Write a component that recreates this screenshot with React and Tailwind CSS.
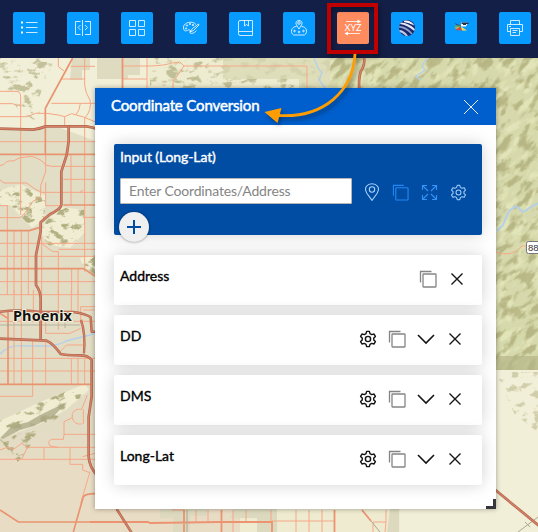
const SHADOW = 'shadow-[0_0_16px_rgba(0,0,0,0.18)]';

function Highway({ d, w = 3 }) {
  return (
    <g fill="none" strokeLinejoin="round">
      <path d={d} stroke="#b0674f" strokeWidth={w * 2.9} />
      <path d={d} stroke="#d98267" strokeWidth={w * 1.4} />
    </g>
  );
}

function Basemap() {
  return (
    <svg className="absolute inset-0 h-full w-full" viewBox="0 0 538 532" aria-hidden="true">
      <defs>
        <filter id="relief" x="0" y="0" width="1" height="1" colorInterpolationFilters="sRGB">
          <feTurbulence type="fractalNoise" baseFrequency="0.09 0.13" numOctaves="4" seed="8" />
          <feColorMatrix values="0 0 0 0 .62  0 0 0 0 .61  0 0 0 0 .41  7 0 0 0 -3.7" />
          <feComposite in2="SourceAlpha" operator="in" />
        </filter>
        <filter id="ridges" x="0" y="0" width="1" height="1" colorInterpolationFilters="sRGB">
          <feTurbulence type="fractalNoise" baseFrequency="0.06 0.13" numOctaves="4" seed="5" />
          <feColorMatrix values="0 0 0 0 .67  0 0 0 0 .66  0 0 0 0 .46  6 0 0 0 -3" />
          <feComposite in2="SourceAlpha" operator="in" />
        </filter>
        <filter id="light" x="0" y="0" width="1" height="1" colorInterpolationFilters="sRGB">
          <feTurbulence type="fractalNoise" baseFrequency="0.05 0.12" numOctaves="4" seed="21" />
          <feColorMatrix values="0 0 0 0 .91  0 0 0 0 .92  0 0 0 0 .75  6 0 0 0 -3" />
          <feComposite in2="SourceAlpha" operator="in" />
        </filter>
        <linearGradient id="desert" x1="0" y1="0" x2="0" y2="1">
          <stop offset="0" stopColor="#e2dec5" />
          <stop offset=".7" stopColor="#e2dcc4" />
          <stop offset="1" stopColor="#eadcc4" />
        </linearGradient>
      </defs>
      <rect width="538" height="532" fill="#f2efd8" />
      <path d="M0 128H60L98 142V532H0Z" fill="url(#desert)" />
      <path d="M0 455L98 465V509H240V532H0Z" fill="#e9dcc5" />
      <path d="M145 509H400V532H145Z" fill="#eeebd0" />
      <path d="M72 58H90V70H82V80H70ZM97 58H140V75H128V79H97Z" fill="#dedbc0" />
      <path d="M330 58H538V370H330Z" fill="#d6d9ab" />
      <g transform="rotate(-48 440 180)">
        <path d="M200 -60H680V480H200Z" fill="#000" filter="url(#light)" opacity=".7" />
        <path d="M200 -60H680V480H200Z" fill="#000" filter="url(#ridges)" opacity=".7" />
      </g>
      <path d="M148 58H330V88H148Z" fill="#eeecd0" />
      <path d="M0 58H148V128H60L0 128Z" fill="#f2efd8" />
      <path d="M72 58H90V70H82V80H70ZM97 58H140V75H128V79H97Z" fill="#dedbc0" />
      <path d="M0 128H60L98 142V532H0Z" fill="url(#desert)" />
      <path d="M0 455L98 465V509H240V532H0Z" fill="#e9dcc5" />
      <path d="M240 509H400V532H240Z" fill="#eeebd0" />
      <path d="M400 370H538V532H400Z" fill="#f2efd8" />
      <path d="M490 356H538V370H490Z" fill="#b5b588" opacity=".7" />
      <path d="M496 372H538V432L515 415Z" fill="#000" filter="url(#relief)" opacity=".4" />
      <path d="M0 58H55L38 100L42 125L18 110L0 75ZM150 58H330V88H150Z" fill="#000" filter="url(#relief)" opacity=".55" />
      <path d="M223 58H330V88H299V79H223Z" fill="#d9dab4" opacity=".75" />
      <path d="M0 190L20 184L46 196L44 220L32 228L10 205L0 206ZM45 222L62 207L84 210L85 232L70 248L48 245L40 232ZM80 258L95 255V276L82 264ZM0 421L40 402L85 384L89 390L66 410L38 425L18 432L0 440Z" fill="#f0edd3" />
      <path d="M0 190L20 184L46 196L44 220L32 228L10 205L0 206ZM45 222L62 207L84 210L85 232L70 248L48 245L40 232ZM80 258L95 255V276L82 264ZM0 421L40 402L85 384L89 390L66 410L38 435L18 462L0 440Z" fill="#000" filter="url(#relief)" opacity=".75" />
      <path d="M0 438L12 426L28 422L42 414L67 402L54 416L34 426L20 430L3 439Z" fill="#aaa684" opacity=".75" />
      <path d="M175 509H207V516H190V532H173V518H160V509ZM235 509H277V532H257V518H230ZM390 509H399V532H387Z" fill="#dcd9be" />

      {/* rivers */}
      <g fill="none" stroke="#b5cfe9" strokeWidth="1.4">
        <path d="M0 354Q10 344 23 346H50Q62 344 66 341L90 335L98 332" />
        <path d="M314 58L318 68L322 73L319 80L325 88M427 58L422 66L425 70L416 76L420 80" />
        <path d="M497 231L503 225L509 211L516 206L523 212L531 207L538 203" strokeWidth="2" />
      </g>

      {/* local streets, northwest quarter */}
      <g transform="translate(0 55) scale(.33333)" fill="none" stroke="#f6a585" strokeWidth="3">
        <path d="M0 109H48Q62 110 62 124V480M0 146H38Q46 152 62 151M0 185H82L106 175H140L175 180L194 185L215 176L250 186L285 200M154 145H285M175 9V35L192 48M185 72H254M212 34H285M254 9V90Q256 115 270 135Q276 165 254 190V650M241 145Q240 165 228 179M194 185V214M0 260H285M0 332L12 328Q20 315 40 318L60 308L95 304Q125 312 137 330L155 334H285M137 298V350L122 392V424L98 440L75 474L60 488H0M137 382V452H184M0 375L12 384H80L105 402L125 412H285M190 373H285M213 300V450M240 412L250 405M0 565H285M0 604H285M0 680H285M22 450V720M42 527V720M64 527V720M85 527V720M125 545V720M125 565L148 583L160 590H175V720M175 583H285M215 641V720M234 641V720M254 487H285M0 452H22" />
      </g>
      <g transform="translate(0 55) scale(.33333)" fill="none" stroke="#e99470" strokeWidth="5">
        <path d="M218 9L136 160V298M0 298H285M190 450H285M0 527H88L118 518M0 641H250L285 663" />
      </g>

      {/* local streets, southwest quarter */}
      <g transform="translate(0 290) scale(.33333)" fill="none" stroke="#f5a888" strokeWidth="3">
        <path d="M0 14H285M0 94H285M0 205H285M0 243H285M0 319H98V283M42 0V283M64 0V283M98 150V283M137 150V283M175 0V120M214 0V70M234 0V70M214 205V283M234 205V283M254 205V283M100 0V70M137 70V130H210L242 115M285 50H242V100M250 60H285M180 185L200 165H250M0 480L22 472L40 478L65 460L82 472H285M65 508L82 472M0 508H285M132 472V508M285 433H192V395L217 383V370Q225 355 245 358L262 315M217 383Q222 405 245 402M250 358V402M192 433L190 448H155Q140 454 150 468L175 472M210 472V523H248V540L270 548M270 545L242 640M248 500L285 490" />
      </g>
      <g transform="translate(0 290) scale(.33333)" fill="none" stroke="#e99470" strokeWidth="5">
        <path d="M24 60V283M0 283H270M0 660L55 696H285M220 726L250 620Q258 611 285 611M0 70L25 86" />
      </g>
      <path d="M0 325H80M8 323V327M65 323V328" stroke="#aaa896" strokeWidth=".8" fill="none" />

      {/* roads along the north and south edges */}
      <g fill="none" stroke="#f5a888" strokeWidth="1">
        <path d="M122 66H148M147 58V88M122 79H147M147 66Q163 66 172 63L180 62L184 66L173 82V88M184 66H307V88" />
        <path d="M196 510V522M208 510V522M233 510V532M246 510V521M271 510V522M296 510V532M309 510V532M322 510V532M373 522H386V510M386 522L385 532M373 522V532M272 521H335M172 510H184M496 252Q512 258 522 246H527" />
      </g>
      <g fill="none" stroke="#ec9372" strokeWidth="1.8">
        <path d="M122.500 58V88M90 522H148L150 523L220 522H272V532M184 510V532M221.500 510V532M334.500 510V532M362 510L371 521" />
      </g>
      <path d="M187 510V532M371 521L380 532M518 532L538 517M525 522L530 527" stroke="#aaa891" fill="none" />
      <g transform="scale(.33333)">
        <Highway d="M0 386L100 389Q122 385 137 379H260Q280 381 300 391" />
        <Highway d="M206 379V425L200 465L184 515V615Q182 627 150 643L122 667V695L108 765V855Q122 875 122 895V1020" w={2.8} />
        <Highway d="M0 935Q60 928 120 936H220Q260 942 272 952L275 995H290" w={2.6} />
        <Highway d="M0 1016L140 1022Q160 1030 182 1062Q195 1066 240 1066Q265 1066 275 1080V1190L266 1250V1370Q268 1400 290 1425" w={2.8} />
        <Highway d="M243 960Q257 1000 252 1060" w={2.4} />
        <Highway d="M350 1527L396 1600" w={2.6} />
        <Highway d="M1480 1465L1620 1580" w={2.8} />
        <Highway d="M1092 170Q1096 195 1082 215Q1075 240 1078 270" w={2.8} />
      </g>
      <text x="13" y="321" fontFamily='"Noto Sans", sans-serif' fontSize="14.500" fontWeight="700" textLength="59" fill="#111" stroke="#f3f0de" strokeWidth="2" paintOrder="stroke">Phoenix</text>
      <rect x="526.500" y="241.500" width="20" height="12" rx="2" fill="#fff" stroke="#777" />
      <text x="528" y="251" fontFamily='"Liberation Sans", Arial, sans-serif' fontSize="9.500" fill="#333">88</text>
    </svg>
  );
}

function Line({ size = 20, w = 1, box = 20, className = '', children }) {
  return (
    <svg className={`block shrink-0 ${className}`} width={size} height={size} viewBox={`0 0 ${box} ${box}`} fill="none" stroke="currentColor" strokeWidth={w}>
      {children}
    </svg>
  );
}

const TOOLS = [
  ['Legend', <g key="i"><path d="M7 4.500H18.500M7 9.500H18.500M7 14.500H18.500" /><path d="M3 3.500V5.500M3 8.500V10.500M3 13.500V15.500" strokeWidth="2" /></g>],
  ['Swipe', <path key="i" d="M9.500 2V18M7.500 3.500H2.500V16.500H7.500M12 3.500H17.500V16.500H12M7.500 7L5 9.500L7.500 12M12 7L14.500 9.500L12 12" />],
  ['Basemap Gallery', <path key="i" d="M2.500 2.500H8.500V8.500H2.500ZM11.500 2.500H17.500V8.500H11.500ZM2.500 11.500H8.500V17.500H2.500ZM11.500 11.500H17.500V17.500H11.500Z" />],
  ['Draw', <g key="i"><path d="M15 6.500C12 2.500 3 4 2.500 9C2 13.500 5.500 13.500 7 12C8.500 11.500 10 12 9 13.500C8 16.500 13 16 15.500 12.500M17.500 6L11.500 10.500L9 14L12.500 12.500L18 7Z" /><circle cx="6" cy="7.500" r=".7" /><circle cx="9" cy="6" r=".7" /><circle cx="12" cy="7" r=".7" /><circle cx="5" cy="10.500" r=".7" /></g>],
  ['Bookmarks', <path key="i" d="M5 2.500H17.500V17.500H5Q3.500 17.500 3.500 15.500V4Q3.500 2.500 5 2.500M3.500 13.500H17.500M9.500 2.500V8L11.500 6.500L13.500 8V2.500" />],
  ['Map Notes', <g key="i"><path d="M10 11L7.500 7C4.500 1 15.500 1 12.500 7ZM7.500 8.500C2 8.500 1 15 4.500 17H15.500C19 15 18 8.500 12.500 8.500" /><circle cx="10" cy="5" r="1.300" /><circle cx="5.500" cy="13" r=".8" /><circle cx="10" cy="14" r=".8" /><circle cx="14.500" cy="13" r=".8" /></g>],
  ['Coordinate Conversion', <g key="i"><path d="M3 3.500H16M3 15.500H17" /><path d="M14.500 1.500L18 3.500L14.500 5.500ZM5 13.500L1.500 15.500L5 17.500Z" fill="currentColor" stroke="none" /><text x="1.500" y="12.800" textLength="17" lengthAdjust="spacingAndGlyphs" fontFamily="Lato, sans-serif" fontSize="9.500" fill="currentColor" stroke="none">XYZ</text></g>],
  ['Google Earth', <g key="i" stroke="none"><circle cx="10" cy="10" r="8" fill="#1b2766" /><path d="M4 4.500Q12 5 17.800 11L17.300 13Q10 7 3 6Z" fill="#dfe5f3" /><path d="M2.200 8Q10 8 15.500 15.500L14.500 16.500Q8 10 2 9.500Z" fill="#8fa1d2" /><path d="M2.300 12Q7 12 11 17.800L9 18Q5 14.500 2.800 14Z" fill="#c3cde8" /><path d="M7 2.700Q14 2 17.300 7.500Q12 4.500 7 4Z" fill="#f6f9ff" /></g>],
  ['Pictometry', <g key="i" stroke="none"><path d="M3 5L10 7.500L9 9.500Z" fill="#304a72" /><path d="M10 4.500H17L15 8.500H10Z" fill="#fff" /><path d="M10.500 4.500H17.500V6H15V7H12V6H10.500Z" fill="#263244" /><path d="M3 7.500H10L9 9H4Z" fill="#4fae68" /><path d="M3 10L9.500 8.500L7 11Z" fill="#f3c52b" /><path d="M9 8.500L11 12.500L4.500 12Z" fill="#dc4735" /><path d="M10 8.500L16 12.500H11Z" fill="#f3df54" /></g>],
  ['Print', <path key="i" d="M5.500 6.500V2.500H14.500V6.500M5.500 13.500H2.500V6.500H17.500V13.500H14.500M5.500 10.500H14.500V17.500H5.500ZM7.500 12.500H12.500M7.500 14.500H11M4 8.500H6" />],
];

const Gear = ({ size = 18, className, w = 1.1 }) => (
  <Line size={size} w={w} className={className}>
    <path strokeLinejoin="round" d="M8.500 1.500H11.500L12.200 4L14.100 5.100L16.700 4.500L18.200 7.100L16.400 9V11L18.200 12.900L16.700 15.500L14.100 14.900L12.200 16L11.500 18.500H8.500L7.800 16L5.900 14.900L3.300 15.500L1.800 12.900L3.600 11V9L1.800 7.100L3.300 4.500L5.900 5.100L7.800 4Z" />
    <circle cx="10" cy="10" r="2.900" />
  </Line>
);

const Copy = ({ size = 18, className, w = 1 }) => (
  <Line size={size} w={w} box={18} className={className}>
    <rect x="4" y="4" width="13" height="13" rx=".5" />
    <path d="M1.500 12.500V1.500H12.500" />
  </Line>
);

const Close = () => (
  <Line size={14} box={14} w={1.4}>
    <path d="M1.500 1.500L12.500 12.500M12.500 1.500L1.500 12.500" />
  </Line>
);

function OutputRow({ label, compact }) {
  return (
    <div className={`flex h-[50px] rounded-[2px] bg-white pl-1.5 ${SHADOW} ${compact ? 'pr-[18.5px]' : 'pr-[20.5px]'}`}>
      <span className="mt-[11.5px] flex-1 text-[14px] leading-[18px] text-black [-webkit-text-stroke:0.35px_black]">{label}</span>
      <div className="mt-[14.5px] flex h-[18px] items-center text-[#151515]">
        {!compact && <Gear className="mr-[11px]" w={1.6} />}
        <Copy className="text-[#858585]" w={1.3} />
        {!compact && (
          <Line className="ml-[11px]" size={18} box={18} w={1.6}>
            <path d="M1 5L9 13L17 5" />
          </Line>
        )}
        <div className="ml-[13px]"><Close /></div>
      </div>
    </div>
  );
}

export default function App() {
  return (
    <div className="relative isolate h-[532px] w-[538px] overflow-hidden font-['Lato',sans-serif]">
      <Basemap />
      <header className="relative flex h-[58px] gap-[22px] bg-[#131f47] pl-[13px] pt-3">
        {TOOLS.map(([name, icon], i) => (
          <button key={name} aria-label={name} className={`flex h-8 w-8 shrink-0 items-center justify-center rounded-[2px] text-white ${i === 6 ? 'bg-[#ff8c5f]' : 'bg-[#079aff]'}`}>
            <Line w={0.8}>{icon}</Line>
          </button>
        ))}
      </header>

      <main className="relative ml-[95px] mt-[30px] h-[421px] w-[401px] bg-white shadow-[0_0_5px_rgba(0,0,0,0.35)]">
        <div className="flex h-[37px] items-center justify-between bg-[#005fcc] pl-4 pr-[18px] text-white">
          <h1 className="-mt-1 text-[15px] leading-5 tracking-[-0.14px] [-webkit-text-stroke:0.5px_white]">Coordinate Conversion</h1>
          <Line size={14} box={14} w={0.9}><path d="M0 0L14 14M14 0L0 14" /></Line>
        </div>

        <div className="flex flex-col gap-2.5 pl-[19px] pr-3.5 pt-[19px]">
          <section className={`mb-2.5 flex h-[91px] flex-col rounded-[2px] bg-[#004da3] pl-1.5 ${SHADOW}`}>
            <h2 className="mt-1 text-[14px] leading-[18px] tracking-[-0.1px] text-white [-webkit-text-stroke:0.4px_white]">Input (Long-Lat)</h2>
            <div className="mt-3 flex items-start">
              <input className="h-[26px] w-[232px] rounded-[1px] border border-[#b6b6b6] bg-white px-2 pb-0.5 text-[14px] tracking-[-0.16px] text-black placeholder:text-[#858585]" placeholder="Enter Coordinates/Address" />
              <div className="ml-[10.5px] mt-[5px] flex h-[18px] items-center text-[#a9d1fb]">
                <Line size={18} box={18} w={1.1}>
                  <path d="M9 17.300L4 10.500C0 4 5 .8 9 .8S18 4 14 10.500Z" /><circle cx="9" cy="6.500" r="2.700" />
                </Line>
                <Copy className="ml-[11.5px] text-[#2386f3]" size={17} w={1.2} />
                <Line className="ml-3 text-[#3693f6]" size={17} box={17} w={1.1}>
                  <path d="M7 7L1.500 1.500M1.500 6V1.500H6M10 7L15.500 1.500M11 1.500H15.500V6M7 10L1.500 15.500M1.500 11V15.500H6M10 10L15.500 15.500M11 15.500H15.500V11" />
                </Line>
                <Gear className="ml-3" size={17} w={1.2} />
              </div>
            </div>
            <button aria-label="Add conversion" className="-ml-px mt-2 flex h-[30px] w-[30px] shrink-0 items-center justify-center rounded-full bg-[#f0f0f0] text-[#004da3] shadow-[0_0_3px_rgba(0,0,0,0.45)]">
              <Line size={14} box={14} w={2}><path d="M7 0V14M0 7H14" /></Line>
            </button>
          </section>
          <OutputRow label="Address" compact />
          <OutputRow label="DD" />
          <OutputRow label="DMS" />
          <OutputRow label="Long-Lat" />
        </div>
        <div className="absolute bottom-0 right-0 h-2.5 w-2.5 border-b-3 border-r-3 border-[#35353b]" />
      </main>

      <svg className="pointer-events-none absolute inset-0 h-full w-full" viewBox="0 0 538 532" aria-hidden="true">
        <g className="drop-shadow-[2px_3px_2px_rgba(0,0,0,0.35)]">
          <rect x="329" y="5" width="47" height="47" fill="none" stroke="#c00000" strokeWidth="4" />
          <path d="M355 54C353 91 324 118 279 115.500" fill="none" stroke="#ff9d00" strokeWidth="2.800" />
          <path d="M264.500 112L281.500 108L277.500 123Z" fill="#ff9d00" />
        </g>
      </svg>
    </div>
  );
}
